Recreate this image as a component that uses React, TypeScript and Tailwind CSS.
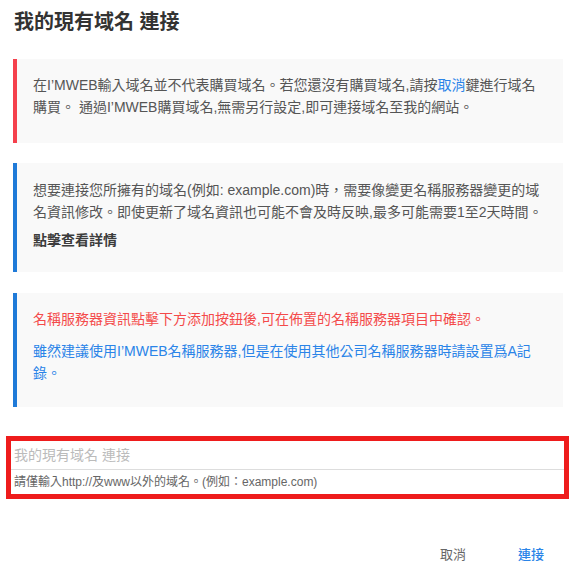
export default function App() {
  return (
    <div className="w-[580px] h-[581px] bg-white text-[#555] font-['Liberation_Sans','Noto_Sans_CJK_TC',sans-serif] overflow-hidden">
      {/* title */}
      <h1 className="pt-[8px] pl-[14px] text-[20px] leading-[28px] font-semibold text-[#333]">
        我的現有域名 連接
      </h1>

      {/* notice 1 */}
      <div className="mt-[23px] ml-[13px] w-[550px] h-[84px] bg-[#f9f9f9] border-l-4 border-[#f5404c] pl-[16px] pt-[15px] text-[14px] leading-[22px] whitespace-nowrap">
        <p>
          在I’MWEB輸入域名並不代表購買域名。若您還沒有購買域名,請按<span className="text-[#2a84e8]">取消</span>鍵進行域名
          <br />
          購買。 通過I’MWEB購買域名,無需另行設定,即可連接域名至我的網站。
        </p>
      </div>

      {/* notice 2 */}
      <div className="mt-[20px] ml-[13px] w-[550px] h-[109px] bg-[#f9f9f9] border-l-4 border-[#1f7ad8] pl-[16px] pt-[16px] text-[14px] leading-[22px] whitespace-nowrap">
        <p>
          想要連接您所擁有的域名(例如: example.com)時，需要像變更名稱服務器變更的域
          <br />
          名資訊修改。即使更新了域名資訊也可能不會及時反映,最多可能需要1至2天時間。
        </p>
        <p className="mt-[6px] font-semibold text-[#3c3c3c]">點擊查看詳情</p>
      </div>

      {/* notice 3 */}
      <div className="mt-[21px] ml-[13px] w-[550px] h-[114px] bg-[#f9f9f9] border-l-4 border-[#1f7ad8] pl-[16px] pt-[15px] text-[14px] leading-[22px] whitespace-nowrap">
        <p className="text-[#f44a4a]">名稱服務器資訊點擊下方添加按鈕後,可在佈置的名稱服務器項目中確認。</p>
        <p className="mt-[10px] text-[#2a84e8]">
          雖然建議使用I’MWEB名稱服務器,但是在使用其他公司名稱服務器時請設置爲A記
          <br />
          錄。
        </p>
      </div>

      {/* domain input (highlighted) */}
      <div className="mt-[29px] ml-[6px] w-[563px] border-[5px] border-[#ee1c1c] bg-white">
        <div className="h-[29px] flex items-center pl-[3px] border-b border-[#ddd] text-[14px] text-[#bbb]">
          我的現有域名 連接
        </div>
        <div className="h-[24px] flex items-center pl-[3px] text-[12px] text-[#666]">
          請僅輸入http://及www以外的域名。(例如：example.com)
        </div>
      </div>

      {/* footer */}
      <div className="mt-[43px] flex items-center h-[26px] text-[13px]">
        <button className="ml-[440px] text-[#666]">取消</button>
        <button className="ml-[52px] text-[#2a84e8] font-medium">連接</button>
      </div>
    </div>
  );
}
